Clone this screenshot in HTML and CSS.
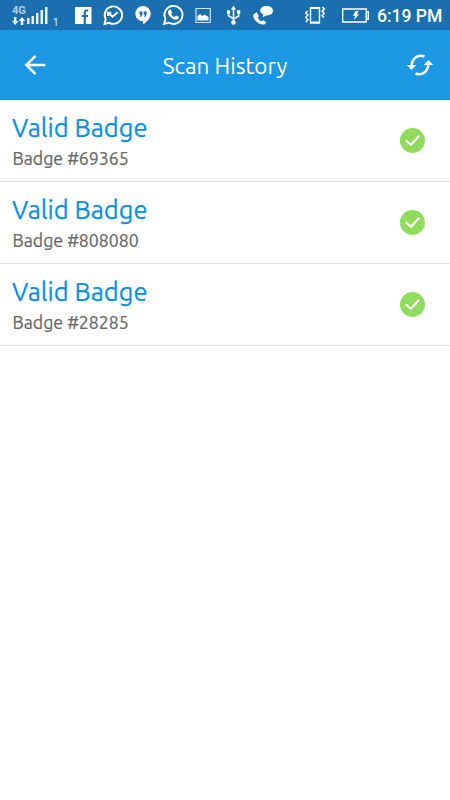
FILE: index.html
```html
<!DOCTYPE html>
<html lang="en">
<head>
<meta charset="utf-8">
<title>Scan History</title>
<link rel="stylesheet" href="styles.css">
</head>
<body>
<div class="status">
  <div class="network">
    <div class="radio">
      <span class="gen">4G</span>
      <svg width="14" height="8" viewBox="0 0 14 8" fill="#fff"><path d="M2 0h2.400v4h2L3.200 8 0 4h2zM8.800 8h2.400V4h2L10 0 6.800 4h2z"/></svg>
    </div>
    <svg class="bars" width="21" height="19" viewBox="0 0 21 19" fill="#e6f1f9"><path d="M0 12h2.500v6H0zM4.500 10H7v8H4.500zM9 7h2.500v11H9zM13.500 4H16v14h-2.500zM18 1h2.500v17H18z"/></svg>
    <span class="sim">1</span>
  </div>
  <div class="notices">
    <svg viewBox="0 0 30 30"><rect x="7" y="7" width="16.500" height="17" rx=".5" fill="#fff"/><path fill="none" stroke="#1a6faf" stroke-width="2.200" d="M20.300 10.500h-1.500q-2 0-2 2V24M13.700 16h6.300"/></svg>
    <svg viewBox="0 0 30 30" fill="none" stroke="#fff" stroke-width="1.900"><path d="M6.500 24l1.200-4.800A8.700 8.700 0 1 1 11.300 22.800z"/><path stroke-width="2" d="M10.500 13l4 3.700 5.200-4.500M10 16v-3.300h3.200"/></svg>
    <svg viewBox="0 0 30 30"><path fill="#fff" d="M15 6a7.700 7.700 0 0 1 7.700 7.700c0 4.300-3.700 8.300-7.700 10.600v-3a7.600 7.600 0 0 1-7.700-7.600A7.700 7.700 0 0 1 15 6z"/><path fill="#1a6faf" d="M11.500 11.500h2.900v3L13 17h-1l.7-2.200h-1.200zM15.700 11.500h2.900v3L17.200 17h-1l.7-2.200h-1.200z"/></svg>
    <svg viewBox="0 0 30 30"><path fill="none" stroke="#fff" stroke-width="1.900" d="M6 24l1.500-5A9 9 0 1 1 11 22.700z"/><path fill="#fff" d="M11.300 9.700l1.600-.3 1.300 3-1 1.500c.8 1.500 1.900 2.500 3.500 3.200l1.300-1.500 2.800 1.400c.1 2-1.400 2.700-2.700 2.800-3.900-.3-7.800-4.200-8.200-7.400 0-1 .5-2.100 1.400-2.700z"/></svg>
    <svg viewBox="0 0 30 30"><path fill="none" stroke="#d4e6f3" stroke-width="1.200" d="M8 8.500h14.300v14H8z"/><path fill="#fff" d="M9.500 20.500v-4.500l2.500-2 2.500 2 2-1.500 4 2.500v3.500z"/></svg>
    <svg viewBox="0 0 30 30"><path fill="none" stroke="#e6f1f9" stroke-width="1.700" d="M15.500 22V8M10.500 12.500v3.200l5 3M20.700 12v4l-5.200 3"/><g fill="#fff"><path d="M15.500 5.500l2.500 4h-5zM19 10.200h3.300v3.300H19z"/><circle cx="10.500" cy="12" r="1.900"/><circle cx="15.500" cy="22.500" r="2.300"/></g></svg>
    <svg viewBox="0 0 30 30" fill="#fff"><path d="M18.500 6c3.800 0 6.500 2 6.500 4.800s-2.700 4.700-6.500 4.700l-3.800 1.500.7-2.600c-2-.8-3.200-2-3.200-3.600C12.200 8 14.700 6 18.500 6z"/><path d="M6.700 13.500l2-1.200 2.200 3.700-1 2c.8 1.600 2 2.600 3.500 3.200l2-.9 2.800 2.300-1.700 1.800C11 25.300 4 18.700 5.400 14.500z"/></svg>
  </div>
  <div class="system">
    <svg width="22" height="20" viewBox="0 0 22 20" fill="none" stroke="#fff"><path stroke-width="1.400" d="M6.500 2.700h9v15h-9z"/><path stroke-width="2" d="M6 3h10M6 17.500h10"/><path stroke-width="1.600" d="M3.500 6L1.800 8l2 2-2 2.500 2 2-1.800 2.500M18.500 2l1.700 2-2 2.200 2 2.300-2 2 1.700 2"/></svg>
    <svg class="battery" width="27" height="15" viewBox="0 0 27 15"><path fill="none" stroke="#fff" stroke-width="1.400" d="M.7 1h23.500v13H.7zM24.500 3.700h1.800v7.600h-1.800"/><path fill="#fff" d="M13.500 3h3l-1.500 3.200h2l-5.200 6 1.300-4.500H11z"/></svg>
    <span class="clock">6:19 PM</span>
  </div>
</div>
<header class="bar">
  <svg class="back" width="22" height="22" viewBox="0 0 22 22" fill="none" stroke="#fff" stroke-width="2.500"><path d="M11.500 1.800L2.300 11l9.200 9.200M2.500 11H21.300"/></svg>
  <h1>Scan History</h1>
  <svg class="refresh" width="28" height="22" viewBox="0 0 28 22"><g fill="none" stroke="#fff" stroke-width="2.500"><path d="M18.500 2.500C12-.3 5.800 4.700 5.600 12"/><path d="M9.500 19.500C16 22.300 22.200 17.200 22.400 10"/></g><path fill="#fff" d="M.8 11h9.400l-4.700 5zM17.800 11h9.400l-4.700-5z"/></svg>
</header>
<main>
  <div class="row"><div><h2>Valid Badge</h2><p>Badge #69365</p></div><svg width="26" height="26" viewBox="0 0 26 26"><circle cx="12.500" cy="12.500" r="12.500" fill="#8fdc5c"/><path fill="none" stroke="#fff" stroke-width="2.200" stroke-linecap="round" d="M6.500 13l4.500 3.800 7.800-8.500"/></svg></div>
  <div class="row"><div><h2>Valid Badge</h2><p>Badge #808080</p></div><svg width="26" height="26" viewBox="0 0 26 26"><circle cx="12.500" cy="12.500" r="12.500" fill="#8fdc5c"/><path fill="none" stroke="#fff" stroke-width="2.200" stroke-linecap="round" d="M6.500 13l4.500 3.800 7.800-8.500"/></svg></div>
  <div class="row"><div><h2>Valid Badge</h2><p>Badge #28285</p></div><svg width="26" height="26" viewBox="0 0 26 26"><circle cx="12.500" cy="12.500" r="12.500" fill="#8fdc5c"/><path fill="none" stroke="#fff" stroke-width="2.200" stroke-linecap="round" d="M6.500 13l4.500 3.800 7.800-8.500"/></svg></div>
</main>
</body>
</html>
```
FILE: styles.css
```css
* { box-sizing: border-box; }
body { margin: 0; background: #fff; font-family: Ubuntu, "Noto Sans", sans-serif; }
svg { display: block; flex: none; }
h1, h2, p { margin: 0; font-weight: 400; white-space: nowrap; }
.status { height: 30px; background: #1a6faf; display: flex; font-family: Roboto, sans-serif; color: #fff; }
.network { width: 68px; padding: 6px 0 0 12px; display: flex; }
.radio { width: 15px; }
.gen { display: block; height: 11px; font-size: 11px; line-height: 10px; font-weight: 700; color: #b9d3e7; }
.sim { margin: 11px 0 0 5px; font-size: 10px; line-height: 11px; color: #e6f1f9; }
.notices { display: flex; }
.notices svg { width: 30px; height: 30px; }
.system { flex: 1; display: flex; align-items: center; justify-content: flex-end; padding-right: 8px; }
.battery { margin: 0 8px 0 16px; }
.clock { width: 65px; font-size: 17.500px; line-height: 30px; font-weight: 500; white-space: nowrap; padding-top: 2px; }
.bar { height: 70px; background: #1b97e3; border-bottom: 1px solid #138bd4; display: flex; align-items: center; justify-content: space-between; padding: 0 16px 0 24px; color: #fff; }
.bar h1 { font-size: 22.500px; line-height: 30px; margin: 2px 2px 0 0; }
.row { height: 82px; border-bottom: 1px solid #e3e3e3; display: flex; justify-content: space-between; align-items: center; padding: 0 24px 0 12px; }
.row h2 { font-size: 25.500px; line-height: 33px; margin: 2px 0 1px; color: #0c8fe0; -webkit-text-stroke: .25px #0c8fe0; }
.row p { font-size: 17.700px; line-height: 28px; padding-left: .5px; color: #666; -webkit-text-stroke: .2px #666; }
```
